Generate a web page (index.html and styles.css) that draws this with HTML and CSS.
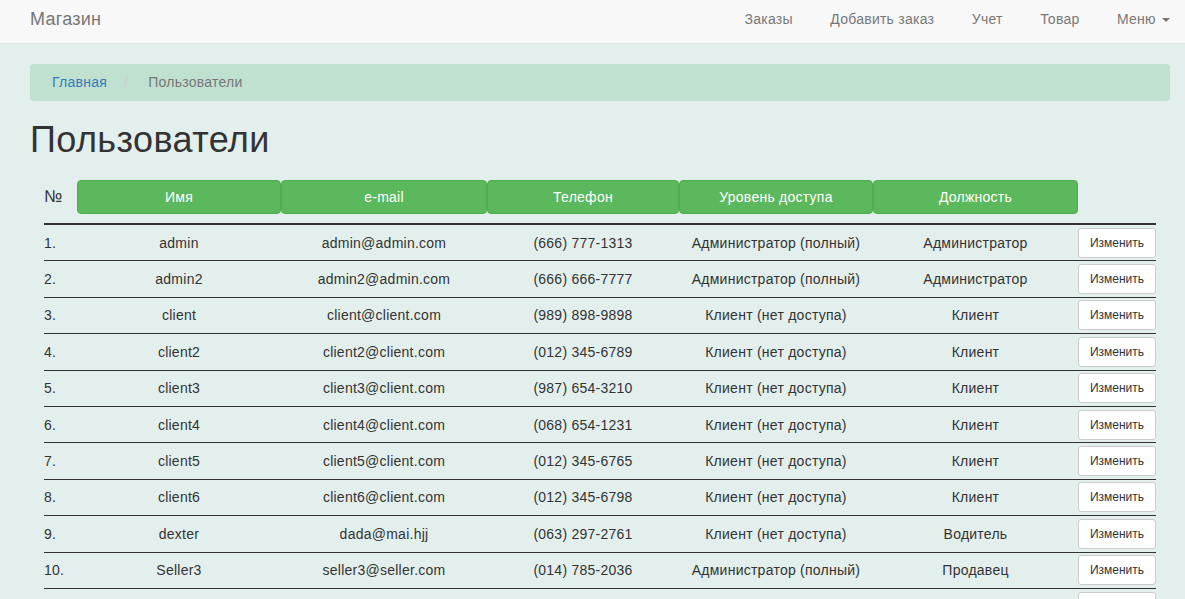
FILE: index.html
```html
<!DOCTYPE html>
<html lang="ru">
<head>
<meta charset="utf-8">
<title>Пользователи</title>
<link rel="stylesheet" href="styles.css">
</head>
<body>
<nav class="navbar">
  <a class="brand" href="#">Магазин</a>
  <ul class="nav">
    <li><a href="#">Заказы</a></li>
    <li><a href="#">Добавить заказ</a></li>
    <li><a href="#">Учет</a></li>
    <li><a href="#">Товар</a></li>
    <li><a href="#">Меню <span class="caret"></span></a></li>
  </ul>
</nav>
<main class="container">
  <ol class="breadcrumb">
    <li><a href="#">Главная</a></li>
    <li class="sep">/</li>
    <li class="active">Пользователи</li>
  </ol>
  <h1 class="title">Пользователи</h1>
  <div class="users">
    <div class="row head">
      <div class="num">№</div>
      <div class="hcell"><span class="hbtn">Имя</span></div>
      <div class="hcell"><span class="hbtn">e-mail</span></div>
      <div class="hcell"><span class="hbtn">Телефон</span></div>
      <div class="hcell"><span class="hbtn">Уровень доступа</span></div>
      <div class="hcell"><span class="hbtn">Должность</span></div>
      <div></div>
    </div>
    <div class="row"><div class="num">1.</div><div class="c">admin</div><div class="c">admin@admin.com</div><div class="c">(666) 777-1313</div><div class="c">Администратор (полный)</div><div class="c">Администратор</div><div><button class="edit">Изменить</button></div></div>
    <div class="row"><div class="num">2.</div><div class="c">admin2</div><div class="c">admin2@admin.com</div><div class="c">(666) 666-7777</div><div class="c">Администратор (полный)</div><div class="c">Администратор</div><div><button class="edit">Изменить</button></div></div>
    <div class="row"><div class="num">3.</div><div class="c">client</div><div class="c">client@client.com</div><div class="c">(989) 898-9898</div><div class="c">Клиент (нет доступа)</div><div class="c">Клиент</div><div><button class="edit">Изменить</button></div></div>
    <div class="row"><div class="num">4.</div><div class="c">client2</div><div class="c">client2@client.com</div><div class="c">(012) 345-6789</div><div class="c">Клиент (нет доступа)</div><div class="c">Клиент</div><div><button class="edit">Изменить</button></div></div>
    <div class="row"><div class="num">5.</div><div class="c">client3</div><div class="c">client3@client.com</div><div class="c">(987) 654-3210</div><div class="c">Клиент (нет доступа)</div><div class="c">Клиент</div><div><button class="edit">Изменить</button></div></div>
    <div class="row"><div class="num">6.</div><div class="c">client4</div><div class="c">client4@client.com</div><div class="c">(068) 654-1231</div><div class="c">Клиент (нет доступа)</div><div class="c">Клиент</div><div><button class="edit">Изменить</button></div></div>
    <div class="row"><div class="num">7.</div><div class="c">client5</div><div class="c">client5@client.com</div><div class="c">(012) 345-6765</div><div class="c">Клиент (нет доступа)</div><div class="c">Клиент</div><div><button class="edit">Изменить</button></div></div>
    <div class="row"><div class="num">8.</div><div class="c">client6</div><div class="c">client6@client.com</div><div class="c">(012) 345-6798</div><div class="c">Клиент (нет доступа)</div><div class="c">Клиент</div><div><button class="edit">Изменить</button></div></div>
    <div class="row"><div class="num">9.</div><div class="c">dexter</div><div class="c">dada@mai.hjj</div><div class="c">(063) 297-2761</div><div class="c">Клиент (нет доступа)</div><div class="c">Водитель</div><div><button class="edit">Изменить</button></div></div>
    <div class="row"><div class="num">10.</div><div class="c">Seller3</div><div class="c">seller3@seller.com</div><div class="c">(014) 785-2036</div><div class="c">Администратор (полный)</div><div class="c">Продавец</div><div><button class="edit">Изменить</button></div></div>
    <div class="row"><div class="num"></div><div class="c"></div><div class="c"></div><div class="c"></div><div class="c"></div><div class="c"></div><div><button class="edit" aria-label="Изменить"></button></div></div>
  </div>
</main>
</body>
</html>
```
FILE: styles.css
```css
* { box-sizing: border-box; }
html, body { margin: 0; padding: 0; }
body {
  background: #e3efec;
  font-family: "Liberation Sans", Arial, sans-serif;
  font-size: 14px;
  line-height: 20px;
  letter-spacing: 0.25px;
  color: #333;
  overflow: hidden;
}
a { text-decoration: none; }

.navbar {
  display: flex;
  align-items: flex-start;
  justify-content: space-between;
  height: 44px;
  padding: 9px 15px 0 30px;
  background: #f8f8f8;
  border-bottom: 1px solid #e7e7e7;
}
.brand {
  font-size: 18px;
  line-height: 20px;
  color: #777;
}
.nav {
  display: flex;
  gap: 37.5px;
  list-style: none;
  margin: 0;
  padding: 0;
}
.nav a { color: #777; white-space: nowrap; }
.caret {
  display: inline-block;
  width: 0;
  height: 0;
  margin-left: 2px;
  vertical-align: middle;
  border-top: 4px solid #777;
  border-left: 4px solid transparent;
  border-right: 4px solid transparent;
}

.container {
  width: 1140px;
  margin-left: 30px;
}
.breadcrumb {
  display: flex;
  list-style: none;
  margin: 20px 0 0;
  padding: 8px 22px;
  height: 37px;
  background: #c0e0d0;
  border-radius: 4px;
}
.breadcrumb a { color: #337ab7; }
.breadcrumb .sep { color: #ccc; padding: 0 20px 0 17px; }
.breadcrumb .active { color: #777; }

.title {
  margin: 19px 0 0;
  font-size: 36px;
  line-height: 40px;
  font-weight: 500;
  letter-spacing: 0.4px;
  color: #333;
}

.users {
  width: 1112px;
  margin: 12px 0 0 14px;
}
.row {
  display: grid;
  grid-template-columns: 33px 204px 206px 192px 194px 205px 78px;
  align-items: center;
  height: 36.4px;
  border-bottom: 1px solid #333;
}
.row.head {
  height: 53px;
  padding: 8px 0 9px;
  border-bottom: 2px solid #333;
}
.head .num { font-size: 17px; letter-spacing: 0; }
.hbtn {
  display: block;
  height: 34px;
  line-height: 32px;
  text-align: center;
  color: #fff;
  background: #5cb85c;
  border: 1px solid #4cae4c;
  border-radius: 4px;
}
.c { text-align: center; white-space: nowrap; }
.edit {
  display: block;
  width: 78px;
  height: 30px;
  padding: 0;
  font-family: inherit;
  font-size: 12px;
  letter-spacing: 0;
  color: #333;
  background: #fff;
  border: 1px solid #ccc;
  border-radius: 3px;
}
```
